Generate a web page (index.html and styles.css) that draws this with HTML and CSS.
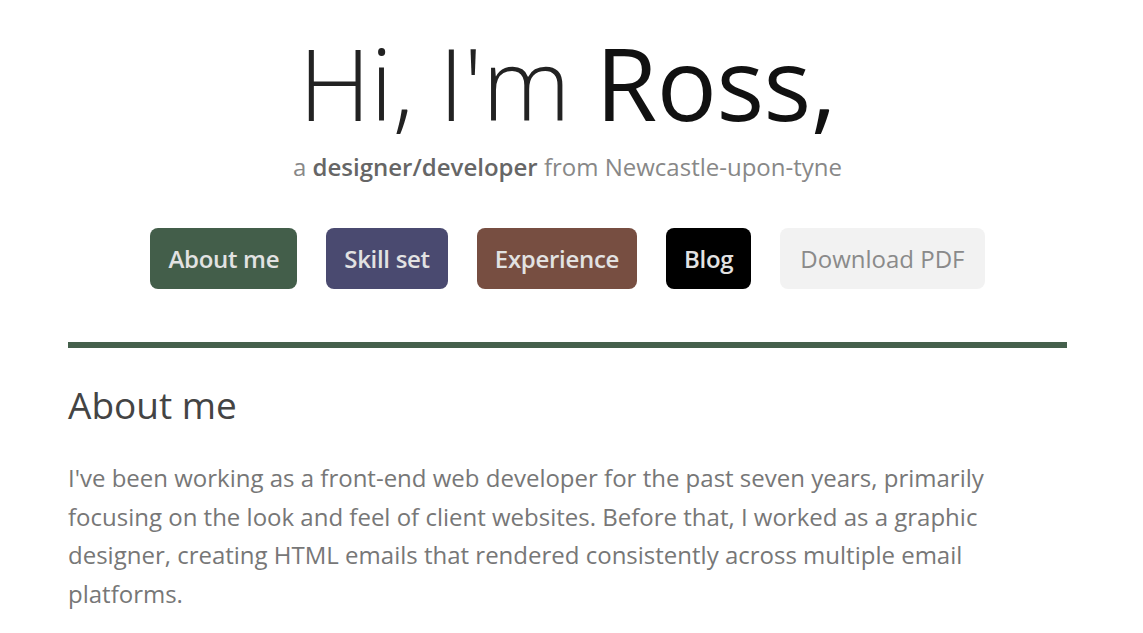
FILE: index.html
```html
<!DOCTYPE html>
<html>
<head>
<meta charset="utf-8">
<link rel="stylesheet" href="styles.css">
</head>
<body>
<div class="page">
  <header class="hero">
    <h1 class="title"><span class="light">Hi, I'm</span> Ross,</h1>
    <p class="tagline">a <strong>designer/developer</strong> from Newcastle-upon-tyne</p>
    <nav class="nav">
      <a class="btn btn-about">About me</a>
      <a class="btn btn-skill">Skill set</a>
      <a class="btn btn-exp">Experience</a>
      <a class="btn btn-blog">Blog</a>
      <a class="btn btn-pdf">Download PDF</a>
    </nav>
  </header>
  <section class="section">
    <h2 class="section-title">About me</h2>
    <p class="section-text">I've been working as a front-end web developer for the past seven years, primarily focusing on the look and feel of client websites. Before that, I worked as a graphic designer, creating HTML emails that rendered consistently across multiple email platforms.</p>
  </section>
</div>
</body>
</html>
```
FILE: styles.css
```css
html, body {
  margin: 0;
  padding: 0;
  background: #fff;
}
body {
  font-family: "Open Sans", "Liberation Sans", sans-serif;
  padding-right: 8px;
}
.page {
  width: 999px;
  margin: 0 auto;
}
.hero {
  display: flex;
  flex-direction: column;
  align-items: center;
  border-bottom: 6px solid #45604c;
  padding-bottom: 53px;
}
.title {
  margin: 22px 0 0;
  font-size: 100px;
  font-weight: 400;
  line-height: 120px;
  color: #111;
  letter-spacing: -0.5px;
}
.light {
  font-weight: 300;
  color: #222;
}
.tagline {
  margin: 10px 0 0;
  font-size: 24px;
  line-height: 30px;
  color: #888;
}
.tagline strong {
  font-weight: 600;
  color: #666;
}
.nav {
  display: flex;
  gap: 29px;
  margin-top: 46px;
}
.btn {
  display: flex;
  align-items: center;
  height: 61px;
  padding: 0 18px;
  border-radius: 8px;
  font-size: 24px;
  font-weight: 600;
  color: #e2e2e2;
  box-sizing: border-box;
  letter-spacing: -0.3px;
}
.btn-about { background: #435e4a; }
.btn-skill { background: #4a4a70; }
.btn-exp { background: #774e41; }
.btn-blog { background: #000; }
.btn-pdf {
  background: #f2f2f2;
  color: #8a8a8a;
  font-weight: 400;
  padding: 0 20px;
  letter-spacing: 0;
}
.section-title {
  margin: 32px 0 0;
  font-size: 37px;
  font-weight: 400;
  color: #444;
  line-height: 50px;
}
.section-text {
  margin: 29px 0 0;
  font-size: 24px;
  line-height: 38.5px;
  color: #777;
}
```
